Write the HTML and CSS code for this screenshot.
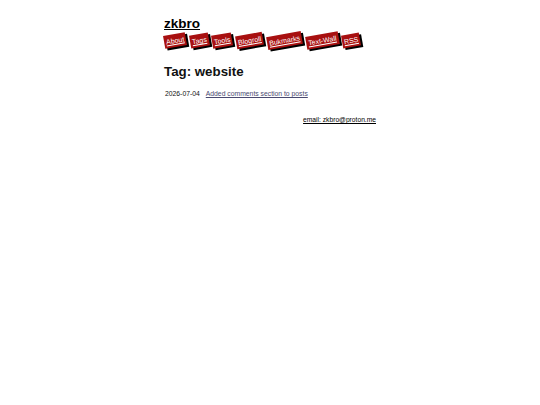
FILE: index.html
```html
<!DOCTYPE html>
<html lang="en">
<head>
<meta charset="utf-8">
<title>Tag: website - zkbro</title>
<link rel="stylesheet" href="styles.css">
</head>
<body>
<div class="page">
  <header class="site-header">
    <a class="site-title" href="#">zkbro</a>
    <nav class="nav">
      <a class="nav-link" href="#">About</a>
      <a class="nav-link" href="#">Tags</a>
      <a class="nav-link" href="#">Tools</a>
      <a class="nav-link" href="#">Blogroll</a>
      <a class="nav-link" href="#">Bukmarks</a>
      <a class="nav-link" href="#">Text-Wall</a>
      <a class="nav-link" href="#">RSS</a>
    </nav>
  </header>
  <main>
    <h1 class="tag-title">Tag: website</h1>
    <ul class="posts">
      <li class="post"><span class="post-date">2026-07-04</span><a class="post-link" href="#">Added comments section to posts</a></li>
    </ul>
  </main>
  <footer class="footer">
    <a class="email" href="#">email: zkbro@proton.me</a>
  </footer>
</div>
</body>
</html>
```
FILE: styles.css
```css
html, body {
  margin: 0;
  padding: 0;
  background: #ffffff;
}
body {
  font-family: "Liberation Sans", Arial, sans-serif;
  color: #111111;
}
.page {
  width: 212px;
  margin: 0 auto;
  padding-top: 16px;
}
.site-header {
  display: flex;
  flex-direction: column;
}
.site-title {
  font-size: 13.5px;
  font-weight: bold;
  color: #000000;
  line-height: 16px;
  text-decoration: underline;
}
.nav {
  display: flex;
  gap: 3.6px;
  margin-top: 2px;
  padding-left: 0;
}
.nav-link {
  display: block;
  background: #a81010;
  color: #ffffff;
  font-size: 7px;
  line-height: 9px;
  padding: 2px 2px;
  box-shadow: 2px 2px 0 #000000;
  transform: rotate(-10deg);
  text-decoration: underline;
}
.tag-title {
  font-size: 13.3px;
  font-weight: bold;
  margin: 17px 0 0 0;
  line-height: 16px;
}
.posts {
  list-style: none;
  margin: 9px 0 0 0;
  padding: 0 0 0 1px;
  font-size: 6.8px;
  line-height: 9px;
}
.post-date {
  margin-right: 6px;
}
.post-link {
  color: #4a4a70;
  text-decoration: underline;
}
.footer {
  display: flex;
  justify-content: flex-end;
  margin-top: 17px;
  font-size: 6.7px;
  line-height: 9px;
}
.email {
  color: #000000;
  text-decoration: underline;
}
```
